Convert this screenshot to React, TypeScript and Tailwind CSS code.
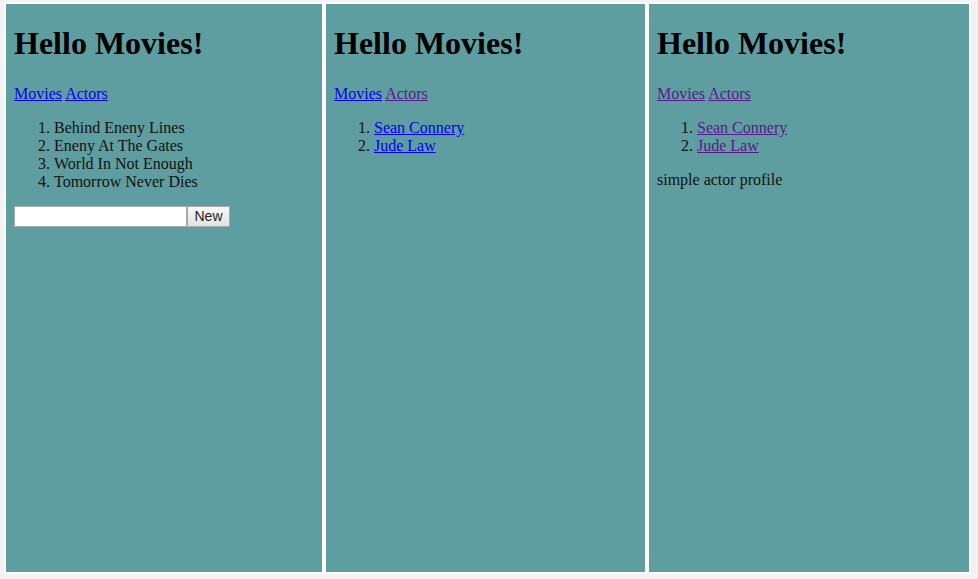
import React from "react";

const serif = { fontFamily: '"Liberation Serif", "Times New Roman", serif' };

function Nav({ moviesVisited, actorsVisited }: { moviesVisited?: boolean; actorsVisited?: boolean }) {
  return (
    <div className="text-[16px] leading-[normal] pt-[1px]">
      <a href="#" className={"underline " + (moviesVisited ? "text-[#551a8b]" : "text-[#0000ee]")}>Movies</a>{" "}
      <a href="#" className={"underline " + (actorsVisited ? "text-[#551a8b]" : "text-[#0000ee]")}>Actors</a>
    </div>
  );
}

function Title() {
  return <h1 className="text-[32px] font-bold leading-[normal] mt-[21.44px] mb-[21.44px] text-black">Hello Movies!</h1>;
}

export default function App() {
  const movies = ["Behind Eneny Lines", "Eneny At The Gates", "World In Not Enough", "Tomorrow Never Dies"];
  const actors = ["Sean Connery", "Jude Law"];

  return (
    <div className="w-[978px] h-[579px] bg-[#f2f2f2] pl-[4px] pr-[7px] pt-[2px] pb-[5px] flex" style={serif}>
      {/* movies */}
      <div className="w-[320px] border-2 border-white bg-[#5f9ea0] px-[8px] text-[#111]">
        <Title />
        <Nav />
        <ol className="list-decimal pl-[40px] mt-[16px] mb-[15px] text-[16px] leading-[normal]">
          {movies.map((m) => (
            <li key={m}>{m}</li>
          ))}
        </ol>
        <div className="flex">
          <input className="w-[173px] h-[21px] bg-white border border-[#a9a9a9] outline-none px-1 text-[13px]" />
          <button
            className="w-[43px] h-[21px] border border-[#a9a9a9] bg-gradient-to-b from-[#f8f8f8] to-[#e2e2e2] text-[14px] text-[#222] leading-none"
            style={{ fontFamily: '"Liberation Sans", Arial, sans-serif' }}
          >
            New
          </button>
        </div>
      </div>

      {/* actors */}
      <div className="w-[323px] border-2 border-white bg-[#5f9ea0] px-[8px] text-[#111]">
        <Title />
        <Nav actorsVisited />
        <ol className="list-decimal pl-[40px] my-[16px] text-[16px] leading-[normal]">
          {actors.map((a) => (
            <li key={a}>
              <a href="#" className="underline text-[#0000ee]">{a}</a>
            </li>
          ))}
        </ol>
      </div>

      {/* actor profile */}
      <div className="flex-1 border-2 border-white bg-[#5f9ea0] px-[8px] text-[#111]">
        <Title />
        <Nav moviesVisited actorsVisited />
        <ol className="list-decimal pl-[40px] my-[16px] text-[16px] leading-[normal]">
          {actors.map((a) => (
            <li key={a}>
              <a href="#" className="underline text-[#551a8b]">{a}</a>
            </li>
          ))}
        </ol>
        <p className="text-[16px] leading-[normal]">simple actor profile</p>
      </div>
    </div>
  );
}
